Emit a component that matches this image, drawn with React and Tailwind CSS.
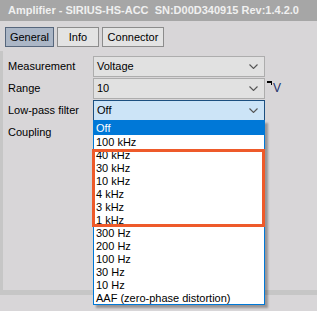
import { useState } from 'react'

const options = [
  'Off',
  '100 kHz',
  '40 kHz',
  '30 kHz',
  '10 kHz',
  '4 kHz',
  '3 kHz',
  '1 kHz',
  '300 Hz',
  '200 Hz',
  '100 Hz',
  '30 Hz',
  '10 Hz',
  'AAF (zero-phase distortion)',
]

function Chevron() {
  return (
    <svg width="9" height="5" viewBox="0 0 9 5" className="text-[#555]" aria-hidden="true">
      <path d="M0.5 0.5 L4.5 4.5 L8.5 0.5" fill="none" stroke="currentColor" strokeWidth="1.1" />
    </svg>
  )
}

function Select({ value, active }) {
  return (
    <div
      className={
        'flex h-[21px] w-[172px] items-center justify-between border pl-[3px] pr-[6px] ' +
        (active ? 'border-[#1b4f80] bg-[#cce4f7]' : 'border-[#adadad] bg-[#e1e1e1]')
      }
    >
      <span>{value}</span>
      <Chevron />
    </div>
  )
}

function Tab({ label, selected, width }) {
  return (
    <button
      className={
        'h-[20px] border leading-none ' +
        width +
        (selected ? ' border-[#56667c] bg-[#abb6c6]' : ' border-[#8c8c8c] bg-[#e3e3e3]')
      }
    >
      {label}
    </button>
  )
}

export default function App() {
  const [selected] = useState(0)

  return (
    <div className="relative h-[311px] w-[317px] overflow-hidden bg-[#d8d6d8] font-['Liberation_Sans',sans-serif] text-[11px] text-black">
      {/* Title bar */}
      <div className="flex h-[21px] items-center bg-[#a6a6a6] pl-[8px] text-[11px] font-bold whitespace-pre text-[#f0f0f0]">
        Amplifier - SIRIUS-HS-ACC  SN:D00D340915 Rev:1.4.2.0
      </div>

      {/* Tabs */}
      <div className="flex gap-[3px] pt-[6px] pl-[5px]">
        <Tab label="General" width="w-[49px]" selected />
        <Tab label="Info" width="w-[42px]" />
        <Tab label="Connector" width="w-[62px]" />
      </div>

      {/* Settings panel */}
      <div className="mt-[4px] h-[244px] border-b-[5px] border-l-[3px] border-[#c6c6c6] pt-[5px]">
        <div className="grid grid-cols-[85px_auto] gap-y-[1px] pl-[5px]">
          <div className="flex h-[21px] items-center">Measurement</div>
          <Select value="Voltage" />
          <div className="flex h-[21px] items-center">Range</div>
          <div className="flex items-start">
            <Select value="10" />
            <span className="mt-[3px] ml-[2px] flex items-start">
              <span className="h-[4px] w-[5px] border-t-[2px] border-r-[1px] border-black" />
              <span className="mt-[1px] ml-[1px] text-[12px] leading-none text-[#22306a]">V</span>
            </span>
          </div>
          <div className="flex h-[21px] items-center">Low-pass filter</div>
          <Select value="Off" active />
          <div className="flex h-[21px] items-center">Coupling</div>
          <div />
        </div>
      </div>

      {/* Open drop-down list */}
      <div className="absolute top-[120px] left-[93px] w-[172px] border border-[#0078d7] bg-white shadow-[3px_3px_2px_rgba(0,0,0,0.3)]">
        {options.map((o, i) => (
          <div
            key={o}
            className={
              'pl-[2px] whitespace-nowrap ' +
              (i === selected
                ? 'h-[14px] bg-[#0078d7] leading-[14px] text-white'
                : 'h-[13px] leading-[15px]')
            }
          >
            {o}
          </div>
        ))}
      </div>

      {/* Highlight box */}
      <div className="pointer-events-none absolute top-[149px] left-[92px] h-[78px] w-[173px] border-[3px] border-[#ee5a2a]" />
    </div>
  )
}
